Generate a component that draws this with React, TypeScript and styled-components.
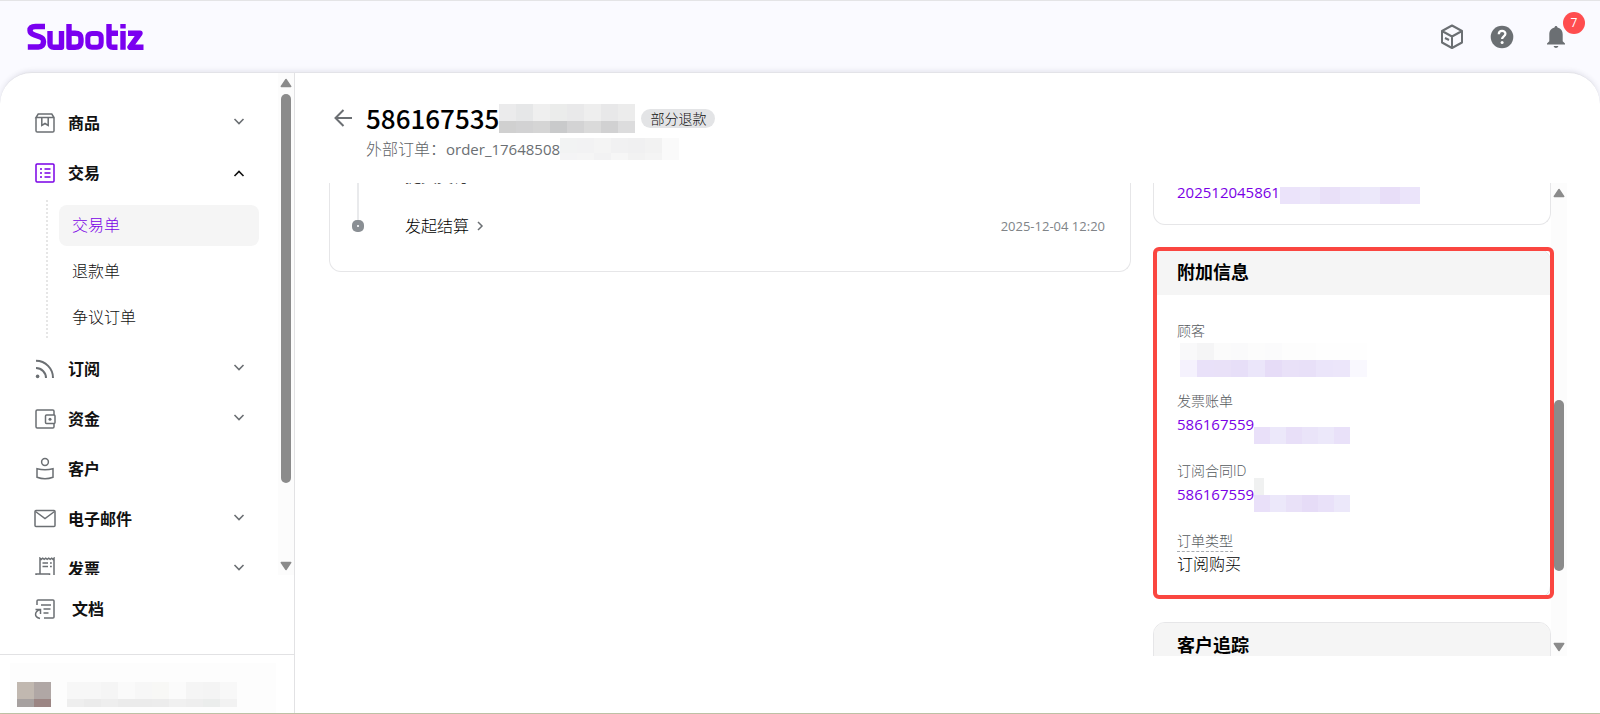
import React from 'react';
import styled, { createGlobalStyle, css } from 'styled-components';

const Global = createGlobalStyle`
  *, *::before, *::after { box-sizing: border-box; }
  body {
    margin: 0;
    background: #fafaff;
    color: #111;
    font-family: 'Open Sans', 'Noto Sans CJK SC', sans-serif;
    font-size: 16px;
    font-weight: 400;
  }
  button { font: inherit; color: inherit; background: none; border: 0; padding: 0; cursor: pointer; }
  a { color: inherit; text-decoration: none; }
  h1, h2, p, ul, dl, dd { margin: 0; padding: 0; }
  ul { list-style: none; }
`;

const Page = styled.div`
  display: flex;
  flex-direction: column;
  height: 100vh;
  border-top: 1px solid #e4e4e6;
  border-bottom: 1px solid #c3c7a8;
`;

const TopBar = styled.header`
  display: flex;
  align-items: center;
  justify-content: space-between;
  flex: none;
  height: 71px;
  padding: 0 14px 0 27px;
`;

const Logo = styled.a`
  display: block;
  height: 28px;
`;

const Tools = styled.div`
  display: flex;
  align-items: center;
  gap: 24px;
`;

const ToolButton = styled.button`
  position: relative;
  display: grid;
  place-items: center;
  width: 26px;
  height: 26px;
  color: #6b6f73;
  &:last-child { margin: 0 17px 0 4px; }
`;

const Count = styled.span`
  position: absolute;
  left: 20px;
  top: -12px;
  width: 22px;
  height: 22px;
  border-radius: 50%;
  background: #ff4d4f;
  color: #fff;
  font-size: 12px;
  line-height: 22px;
  text-align: center;
`;

const Shell = styled.div`
  display: flex;
  flex: 1;
  min-height: 0;
  background: #fff;
  border-top: 1px solid #e3e3e8;
  border-radius: 32px 32px 0 0;
  box-shadow: 0 -1px 5px rgba(60, 60, 90, 0.12);
  overflow: hidden;
`;

const Sidebar = styled.aside`
  display: flex;
  flex-direction: column;
  flex: none;
  width: 295px;
  border-right: 1px solid #e2e2e4;
`;

const NavScroll = styled.div`
  display: flex;
  flex: 1;
  min-height: 0;
  overflow: hidden;
`;

const Nav = styled.nav`
  flex: 1;
  padding-top: 25px;
`;

const NavRow = styled.button<{ $active?: boolean }>`
  display: flex;
  align-items: center;
  width: 100%;
  height: 50px;
  padding: 0 33px;
  gap: 11px;
  text-align: left;
  font-weight: 700;
  color: #111;
  svg { flex: none; color: #6b6f73; }
  svg:first-child { color: ${(p) => (p.$active ? '#7a00e6' : '#6b6f73')}; }
  svg:last-child { color: ${(p) => (p.$active ? '#111' : '#6b6f73')}; }
`;

const NavText = styled.span`
  flex: 1;
  line-height: 24px;
`;

const SubNav = styled.ul`
  display: flex;
  flex-direction: column;
  gap: 5px;
  margin: 2px 19px 6px 46px;
  padding: 5px 0 0 11px;
  border-left: 2px dotted #e6e6e6;
`;

const SubLink = styled.a<{ $active?: boolean }>`
  display: block;
  height: 41px;
  padding-left: 13px;
  border-radius: 8px;
  line-height: 41px;
  font-weight: 300;
  ${(p) => p.$active && css`background: #f5f5f5; color: #7a00e6;`}
`;

const DocsLink = styled.a`
  display: flex;
  align-items: flex-start;
  flex: none;
  gap: 15px;
  height: 79px;
  padding: 22px 33px 0;
  font-weight: 700;
  line-height: 24px;
  svg { color: #6b6f73; }
`;

const Account = styled.div`
  display: flex;
  flex: none;
  height: 59px;
  padding: 8px 18px 0 10px;
  border-top: 1px solid #e2e2e4;
`;

const AccountInner = styled.div`
  display: flex;
  align-items: flex-end;
  flex: 1;
  gap: 16px;
  padding: 0 0 6px 7px;
  background: #fdfdfd;
`;

const Track = styled.div`
  display: flex;
  flex-direction: column;
  align-items: center;
  flex: none;
  width: 16px;
  padding: 5px 0 4px;
  background: #fcfcfc;
`;

const Rail = styled.div<{ $before: number; $after: number }>`
  display: flex;
  flex-direction: column;
  flex: 1;
  width: 10px;
  padding: 6px 0;
  &::before { content: ''; flex: ${(p) => p.$before} 0 0; }
  &::after { content: ''; flex: ${(p) => p.$after} 0 0; }
`;

const Thumb = styled.div<{ $size: number }>`
  flex: ${(p) => p.$size} 0 0;
  border-radius: 5px;
  background: #8b8b8b;
`;

const Main = styled.main`
  display: flex;
  flex-direction: column;
  flex: 1;
  min-width: 0;
  padding: 28px 33px 57px 34px;
`;

const OrderHead = styled.header`
  display: grid;
  grid-template-columns: 18px 1fr;
  column-gap: 14px;
  row-gap: 2px;
  align-content: start;
  flex: none;
  height: 82px;
  padding-left: 5px;
`;

const Back = styled.button`
  height: 34px;
  color: #6b6f73;
  svg { display: block; }
`;

const TitleRow = styled.div`
  display: flex;
  align-items: center;
  height: 34px;
`;

const Title = styled.h1`
  font-family: 'Noto Sans CJK SC', sans-serif;
  font-size: 26px;
  line-height: 34px;
  font-weight: 500;
  color: #000;
`;

const Tag = styled.span`
  margin-left: 6px;
  padding: 0 9px;
  border-radius: 10px;
  background: #e3e4e6;
  color: #111;
  font-size: 14px;
  font-weight: 300;
  line-height: 19px;
`;

const External = styled.p`
  display: flex;
  grid-column: 2;
  height: 24px;
  color: #5f6367;
  font-weight: 300;
  line-height: 24px;
`;

const OrderCode = styled.span`
  font-size: 15px;
  font-weight: 400;
  color: #6b6f73;
`;

const Columns = styled.div`
  display: flex;
  flex: 1;
  min-height: 0;
  overflow: hidden;
`;

const Timeline = styled.section`
  flex: 1;
  min-width: 0;
  height: 89px;
  margin-right: 22px;
  padding: 0 25px 0 22px;
  border: 1px solid #e6e6e8;
  border-top: 0;
  border-radius: 0 0 12px 12px;
`;

const Step = styled.div`
  display: grid;
  grid-template-columns: 12px 1fr auto;
  column-gap: 41px;
  align-items: center;
  height: 50px;
  margin-top: -32px;
  & + & { margin-top: 0; }
`;

const Marker = styled.span`
  display: flex;
  flex-direction: column;
  align-items: center;
  height: 50px;
  &::before { content: ''; width: 2px; height: 19px; background: #e9eaec; }
  &::after { content: ''; width: 2px; height: 19px; background: #e9eaec; }
  ${Step}:last-child &::after { background: none; }
`;

const Dot = styled.i`
  display: grid;
  place-items: center;
  width: 12px;
  height: 12px;
  border-radius: 5px;
  background: #8a8f94;
  &::after { content: ''; width: 2px; height: 2px; background: #e6e8ea; }
`;

const StepName = styled.button`
  display: flex;
  align-items: center;
  gap: 6px;
  font-weight: 300;
  line-height: 24px;
  color: #000;
  svg { color: #6b6f73; }
`;

const Stamp = styled.time`
  font-size: 13px;
  font-weight: 400;
  color: #808488;
`;

const Side = styled.div`
  flex: none;
  width: 398px;
`;

const Card = styled.section`
  position: relative;
  border: 1px solid #e6e6e8;
  border-radius: 12px;
  margin-bottom: 24px;
`;

const TailCard = styled(Card)`
  height: 42px;
  padding: 0 23px;
  border-top: 0;
  border-radius: 0 0 12px 12px;
  line-height: 18px;
`;

const CardTitle = styled.h2`
  height: 45px;
  padding: 0 23px;
  border-radius: 11px 11px 0 0;
  background: #f5f5f5;
  color: #000;
  font-size: 18px;
  font-weight: 700;
  line-height: 44px;
`;

const Highlight = styled.div`
  position: absolute;
  inset: -3px -4px -2px -1px;
  border: 4px solid #fa4640;
  border-radius: 6px;
  pointer-events: none;
`;

const Fields = styled.dl`
  display: flex;
  flex-direction: column;
  gap: 24px;
  padding: 25px 23px 21px;
`;

const Label = styled.dt<{ $hint?: boolean }>`
  color: #55595d;
  font-size: 14px;
  font-weight: 300;
  line-height: 22px;
  span { display: inline-block; line-height: 20px; ${(p) => p.$hint && css`border-bottom: 1px dashed #a8acb0;`} }
`;

const Value = styled.dd`
  display: flex;
  height: 24px;
  color: #000;
  font-weight: 300;
  line-height: 24px;
`;

const IdLink = styled.a`
  display: flex;
  color: #7a00e6;
  font-size: 15px;
  font-weight: 400;
`;

const MosaicGrid = styled.span<{ $top: number; $left: number }>`
  display: inline-flex;
  flex-direction: column;
  flex: none;
  margin: ${(p) => p.$top}px 0 0 ${(p) => p.$left}px;
`;

const MosaicRow = styled.span<{ $h: number }>`
  display: flex;
  flex: none;
  height: ${(p) => p.$h}px;
`;

const Cell = styled.span<{ $w: number; $c: string }>`
  width: ${(p) => p.$w}px;
  background: ${(p) => p.$c};
`;

type Row = { h: number; w: number; colors: string[] };

function Mosaic({ rows, top = 0, left = 0 }: { rows: Row[]; top?: number; left?: number }) {
  return (
    <MosaicGrid $top={top} $left={left} aria-hidden="true">
      {rows.map((r, i) => (
        <MosaicRow key={i} $h={r.h}>
          {r.colors.map((c, j) => <Cell key={j} $w={r.w} $c={c} />)}
        </MosaicRow>
      ))}
    </MosaicGrid>
  );
}

const titleMosaic: Row[] = [
  { h: 17, w: 17, colors: ['#ebebec', '#e6e7e8', '#efefef', '#ebeceb', '#e9e9ea', '#eeeeee', '#e8e8e9', '#ececec'] },
  { h: 12, w: 17, colors: ['#d0d0d0', '#d2d2d3', '#d5d5d5', '#c9cacb', '#d3d3d4', '#dadada', '#d1d1d2', '#dcdcdd'] },
];
const externalMosaic: Row[] = [
  { h: 15, w: 17, colors: ['#f2f3f3', '#f2f2f3', '#f4f4f4', '#f1f1f2', '#f0f0f1', '#f2f2f2', '#fafafa'] },
  { h: 7, w: 17, colors: ['#f4f4f5', '#f5f5f5', '#f2f2f3', '#f6f6f6', '#f2f2f2', '#f4f4f4', '#fafafa'] },
];
const billMosaic: Row[] = [
  { h: 17, w: 20, colors: ['#ebe3fa', '#ece7fa', '#e9e0f8', '#ebe5fa', '#ece8fa', '#e8def8', '#ebe4fa'] },
];
const invoiceMosaic: Row[] = [
  { h: 17, w: 16, colors: ['#e9e0f9', '#ece8fa', '#e8dff8', '#eae4f9', '#ece8fa', '#e9e1f9'] },
];
const contractMosaic: Row[] = [
  { h: 17, w: 10, colors: ['#f0f1f1'] },
  { h: 17, w: 16, colors: ['#e9e0f9', '#ece8fa', '#e9e1f8', '#e6dcf7', '#e9e1f9', '#ece8fa'] },
];
const customerMosaic: Row[] = [
  { h: 17, w: 17, colors: ['#f9f9fa', '#f5f5f6', '#fbfbfb', '#fafafb', '#fcfcfc', '#fbfbfc', '#fdfdfd', '#fdfdfd', '#fefefe', '#fefefe', '#fefefe'] },
  { h: 17, w: 17, colors: ['#f5f2fd', '#e9e1f9', '#e9e1f8', '#e7dff8', '#ebe6fa', '#e6dcf7', '#e9e1f8', '#e8e0f8', '#ebe5fa', '#ece6fa', '#f9f8fe'] },
];
const avatarMosaic: Row[] = [
  { h: 17, w: 17, colors: ['#c1b8b0', '#b0a7a5'] },
  { h: 8, w: 17, colors: ['#a6a09f', '#9b8583'] },
];
const accountMosaic: Row[] = [
  { h: 17, w: 17, colors: ['#f7f7f7', '#f7f7f7', '#f5f5f5', '#fafafa', '#f7f7f7', '#f8f8f6', '#fbfbfb', '#f5f5f5', '#f4f4f4', '#f8f8f8'] },
  { h: 8, w: 17, colors: ['#eeeeee', '#ebebeb', '#eeeeee', '#ebebeb', '#ebebeb', '#ececec', '#f0f0f0', '#eeeeee', '#ebedec', '#f2f2f2'] },
];

type IconProps = { children: React.ReactNode; size?: number };
const Line = ({ children, size = 24 }: IconProps) => (
  <svg width={size} height={size} viewBox="0 0 24 24" fill="none" stroke="currentColor" strokeWidth="1.5" aria-hidden="true">{children}</svg>
);

const icons = {
  goods: <Line><path d="M3 6.5v13.2c0 .8.5 1.3 1.3 1.3h15.4c.8 0 1.3-.5 1.3-1.3V6.500L18.800 3H5.200L3 6.500h18M8.800 6.500v8l3.200-2 3.200 2v-8" /></Line>,
  trade: <Line><rect x="3" y="3" width="18" height="18" rx="1" /><path d="M7 8h2M7 12h2M7 16h2M11.5 8h6M11.5 12h6M11.5 16h6" /></Line>,
  feed: <Line><path d="M3 3.800A17 17 0 0 1 20 21M3 11a10 10 0 0 1 10 10" strokeWidth="2" /><circle cx="4.600" cy="19.400" r="1.800" fill="currentColor" stroke="none" /></Line>,
  wallet: <Line><path d="M21 8V4.200c0-.8-.4-1.200-1.200-1.200H4.200C3.400 3 3 3.400 3 4.200v15.600c0 .8.4 1.200 1.200 1.200h15.600c.8 0 1.200-.4 1.200-1.200V16" /><rect x="12.500" y="8" width="9.500" height="8.500" rx="1" /><circle cx="17" cy="12.200" r="1.500" fill="currentColor" stroke="none" /></Line>,
  person: <Line><circle cx="12" cy="5" r="3.400" /><path d="M4 11.700c4.700 1.300 11.300 1.300 16 0v8.500c-4.700 1.800-11.300 1.800-16 0z" /></Line>,
  mail: <Line><rect x="2" y="3.500" width="20" height="16" rx="1" /><path d="M2.500 4.500l9.500 7 9.500-7" /></Line>,
  receipt: <Line><path d="M7 17V1.200l1.200 1.200 1.500-1.200 1.500 1.200 1.500-1.200 1.500 1.200 1.500-1.200 1.500 1.200 1.500-1.200 1.300 1.200L21 1.200V20H5.500C3.800 20 3 19 3 17h13.500c0 2 1 3 2.300 3M9.500 6h5.500M9.500 9.500h5.500M17 6h1.800M17 9.500h1.800" /></Line>,
  docs: <Line><path d="M4 8V4c0-.6.4-1 1-1h15c.6 0 1 .4 1 1v16c0 .6-.4 1-1 1h-9M8 8h10M10.500 12h7M10.500 16h5M2.500 12.500H7.500V17M7.500 12.500C1.500 14 .5 20 7 21.500" /></Line>,
};

const Chevron = ({ up }: { up?: boolean }) => (
  <svg width="12" height="12" viewBox="0 0 12 12" fill="none" stroke="currentColor" strokeWidth="1.600" aria-hidden="true">
    <path d={up ? 'M1.500 9L6 4.500 10.500 9' : 'M1.500 2L6 6.500 10.500 2'} />
  </svg>
);

const Arrow = ({ down }: { down?: boolean }) => (
  <svg width="12" height="10" viewBox="0 0 12 10" fill="#8b8b8b" stroke="#8b8b8b" strokeWidth="1.500" strokeLinejoin="round" aria-hidden="true">
    <path d={down ? 'M1.300 1.500h9.400L6 8.500z' : 'M1.300 8.500h9.400L6 1.500z'} />
  </svg>
);

const Scrollbar = ({ before, size, after }: { before: number; size: number; after: number }) => (
  <Track aria-hidden="true">
    <Arrow />
    <Rail $before={before} $after={after}><Thumb $size={size} /></Rail>
    <Arrow down />
  </Track>
);

const NavItem = ({ icon, text, state }: { icon: React.ReactNode; text: string; state?: 'open' | 'closed' }) => (
  <NavRow type="button" $active={state === 'open'} aria-expanded={state ? state === 'open' : undefined}>
    {icon}
    <NavText>{text}</NavText>
    {state && <Chevron up={state === 'open'} />}
  </NavRow>
);

export default function App() {
  return (
    <>
      <Global />
      <Page>
        <TopBar>
          <Logo href="#" aria-label="Subotiz">
            <svg width="117" height="28" viewBox="0 0 117 28" fill="none" stroke="#7a00f0" strokeWidth="5.400" strokeLinejoin="round" aria-hidden="true">
              <path d="M18 3.500H8.500C4.500 3.500 3 5 3 7.500s1.500 3.500 4.500 4.500l5 1.700c3 1 4 2 4 5s-1.500 5.300-5 5.300H.800" />
              <path d="M23 8v12c0 3 1 4.200 4 4.200h7.500V8" />
              <path d="M42 1v23.200h6c4.500 0 6-2 6-5.500v-3c0-3.500-1.500-5.500-6-5.500h-4" />
              <path d="M66 10.500h4c3 0 4.200 1.500 4.200 4.200v5c0 3-1.200 4.500-4.200 4.500h-5c-3 0-4.200-1.500-4.200-4.500v-5c0-2.700 1.200-4.200 4.200-4.200z" strokeWidth="5" />
              <path d="M82 1v19c0 3 1 4.200 4 4.200h4.500M80 10.300h11" />
              <path d="M96 8v18.700M96 1v4.500" />
              <path d="M101 10.300h12l-10 13.900h13.500" />
            </svg>
          </Logo>
          <Tools>
            <ToolButton type="button" aria-label="产品">
              <svg width="26" height="26" viewBox="0 0 26 26" fill="none" stroke="currentColor" strokeWidth="2" strokeLinejoin="round" aria-hidden="true">
                <path d="M13 1.500l10 5.500v11.500L13 24 3 18.500V7zM3 7l10 5.500L23 7M13 12.500V24M6 14l4 2" />
              </svg>
            </ToolButton>
            <ToolButton type="button" aria-label="帮助">
              <svg width="26" height="26" viewBox="0 0 26 26" aria-hidden="true">
                <circle cx="13" cy="13" r="11.300" fill="currentColor" />
                <path d="M9.800 10.200c0-4.300 6.600-4.200 6.600-.4 0 2.600-3.300 2.500-3.300 5.200" fill="none" stroke="#fff" strokeWidth="2.300" />
                <circle cx="13.100" cy="18.500" r="1.500" fill="#fff" />
              </svg>
            </ToolButton>
            <ToolButton type="button" aria-label="通知">
              <svg width="26" height="26" viewBox="0 0 26 26" fill="currentColor" aria-hidden="true">
                <path d="M11.500 3.600c0-2.100 3-2.100 3 0 3.600.8 5.200 3.600 5.200 7v6.600l2.300 2.200v1.200H4v-1.200l2.300-2.200v-6.600c0-3.400 1.600-6.200 5.200-7zM10.600 22h4.800c-.6 2.500-4.200 2.500-4.800 0z" />
              </svg>
              <Count>7</Count>
            </ToolButton>
          </Tools>
        </TopBar>
        <Shell>
          <Sidebar>
            <NavScroll>
              <Nav>
                <NavItem icon={icons.goods} text="商品" state="closed" />
                <NavItem icon={icons.trade} text="交易" state="open" />
                <SubNav>
                  <li><SubLink href="#" $active>交易单</SubLink></li>
                  <li><SubLink href="#">退款单</SubLink></li>
                  <li><SubLink href="#">争议订单</SubLink></li>
                </SubNav>
                <NavItem icon={icons.feed} text="订阅" state="closed" />
                <NavItem icon={icons.wallet} text="资金" state="closed" />
                <NavItem icon={icons.person} text="客户" />
                <NavItem icon={icons.mail} text="电子邮件" state="closed" />
                <NavItem icon={icons.receipt} text="发票" state="closed" />
              </Nav>
              <Scrollbar before={0} size={389} after={72} />
            </NavScroll>
            <DocsLink href="#">{icons.docs}文档</DocsLink>
            <Account>
              <AccountInner>
                <Mosaic rows={avatarMosaic} />
                <Mosaic rows={accountMosaic} />
              </AccountInner>
            </Account>
          </Sidebar>
          <Main>
            <OrderHead>
              <Back type="button" aria-label="返回">
                <svg width="18" height="18" viewBox="0 0 18 18" fill="none" stroke="currentColor" strokeWidth="2" aria-hidden="true">
                  <path d="M18 9H1.500M9.500 1L1.500 9l8 8" />
                </svg>
              </Back>
              <TitleRow>
                <Title>586167535</Title>
                <Mosaic rows={titleMosaic} />
                <Tag>部分退款</Tag>
              </TitleRow>
              <External>外部订单：<OrderCode>order_17648508</OrderCode><Mosaic rows={externalMosaic} top={1} /></External>
            </OrderHead>
            <Columns>
              <Timeline>
                <Step>
                  <Marker><Dot /></Marker>
                  <StepName type="button">提交支付</StepName>
                </Step>
                <Step>
                  <Marker><Dot /></Marker>
                  <StepName type="button">
                    发起结算
                    <svg width="10" height="10" viewBox="0 0 10 10" fill="none" stroke="currentColor" strokeWidth="1.500" aria-hidden="true"><path d="M3 1l4 4-4 4" /></svg>
                  </StepName>
                  <Stamp>2025-12-04 12:20</Stamp>
                </Step>
              </Timeline>
              <Side>
                <TailCard>
                  <IdLink href="#">202512045861<Mosaic rows={billMosaic} top={4} /></IdLink>
                </TailCard>
                <Card>
                  <CardTitle>附加信息</CardTitle>
                  <Fields>
                    <div><Label>顾客</Label><Value><Mosaic rows={customerMosaic} top={1} left={3} /></Value></div>
                    <div><Label>发票账单</Label><Value><IdLink href="#">586167559<Mosaic rows={invoiceMosaic} top={15} /></IdLink></Value></div>
                    <div><Label>订阅合同ID</Label><Value><IdLink href="#">586167559<Mosaic rows={contractMosaic} top={-4} /></IdLink></Value></div>
                    <div><Label $hint><span>订单类型</span></Label><Value>订阅购买</Value></div>
                  </Fields>
                  <Highlight />
                </Card>
                <Card><CardTitle>客户追踪</CardTitle></Card>
              </Side>
              <Scrollbar before={198} size={173} after={66} />
            </Columns>
          </Main>
        </Shell>
      </Page>
    </>
  );
}
